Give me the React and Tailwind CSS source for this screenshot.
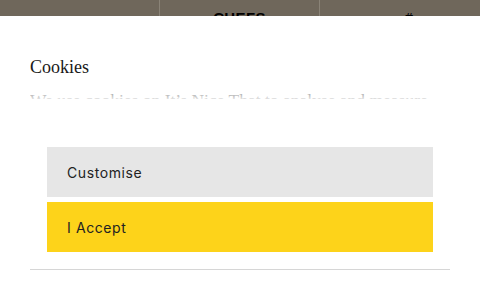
import React from "react";

export default function App() {
  return (
    <div className="w-[480px] h-[300px] overflow-hidden bg-white relative">
      <div className="h-4 bg-[#6f675b] flex overflow-hidden">
        <div className="w-[160px] border-r border-[#8a8377]" />
        <div className="w-[160px] border-r border-[#8a8377] flex justify-center pt-[9px]">
          <span className="text-[15px] leading-[17px] font-bold text-black tracking-wide" style={{ fontFamily: '"Liberation Sans", Arial, sans-serif' }}>CHEFS</span>
        </div>
        <div className="w-[160px] flex justify-center pt-[9px] pl-[18px]">
          <span className="text-[13px] leading-[17px] text-black">#</span>
        </div>
      </div>
      <div className="px-[30px]">
        <h2
          className="pt-[39px] text-[18px] leading-[24px] text-[#1a1a1a]"
          style={{ fontFamily: '"Liberation Serif", "Times New Roman", serif' }}
        >
          Cookies
        </h2>
        <div className="relative mt-[9px] h-[11px] overflow-hidden">
          <p
            className="text-[17.5px] leading-[24px] text-[#9a9a9a] whitespace-nowrap"
            style={{ fontFamily: '"Liberation Serif", "Times New Roman", serif' }}
          >
            We use cookies on It’s Nice That to analyse and measure
          </p>
          <div className="absolute inset-0 bg-gradient-to-b from-transparent via-white/20 to-white/70" />
        </div>
        <div className="mt-[48px] px-[17px] flex flex-col gap-[5px]">
          <button
            className="h-[50px] bg-[#e6e6e6] text-left pl-[20px] text-[14px] tracking-[0.6px] text-[#222]"
            style={{ fontFamily: 'Inter, "Liberation Sans", sans-serif' }}
          >
            Customise
          </button>
          <button
            className="h-[50px] bg-[#fdd31a] text-left pl-[20px] text-[14px] tracking-[0.6px] text-[#222]"
            style={{ fontFamily: 'Inter, "Liberation Sans", sans-serif' }}
          >
            I Accept
          </button>
        </div>
        <div className="mt-[17px] border-t border-[#d6d6d6]" />
      </div>
    </div>
  );
}
